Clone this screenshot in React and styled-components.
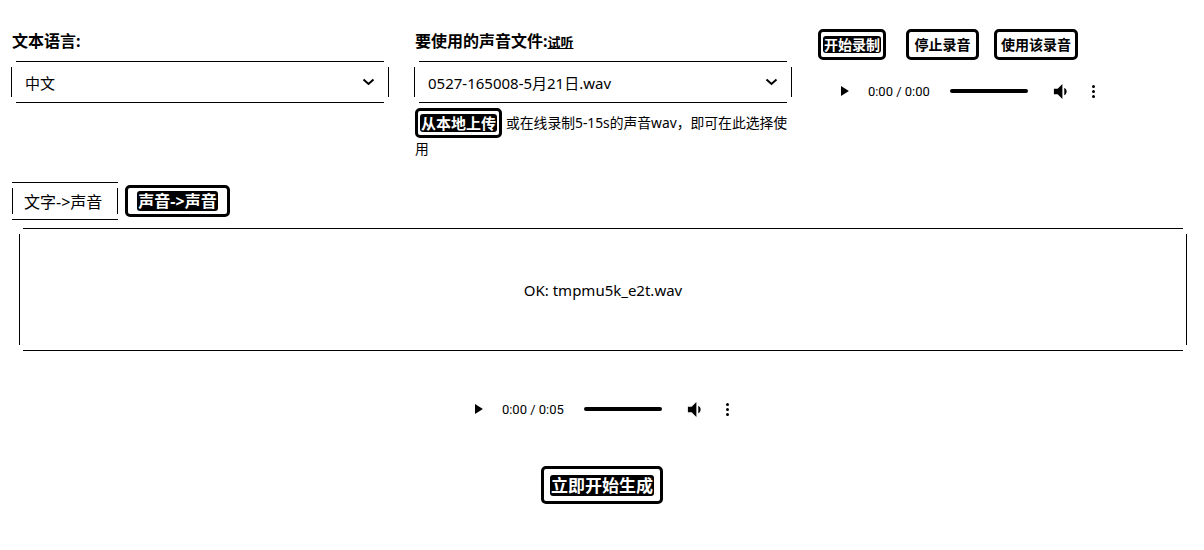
import React from "react";
import styled, { createGlobalStyle } from "styled-components";

const Global = createGlobalStyle`
  html, body { margin: 0; padding: 0; background: #fff; }
  body {
    font-family: "Noto Sans", "Noto Sans CJK SC", sans-serif;
    color: #000;
  }
`;

const gapBorder = (h = 8, v = 12) => `
  background:
    linear-gradient(#000, #000) top center / calc(100% - ${h}px) 1px no-repeat,
    linear-gradient(#000, #000) bottom center / calc(100% - ${h}px) 1px no-repeat,
    linear-gradient(#000, #000) left center / 1px calc(100% - ${v}px) no-repeat,
    linear-gradient(#000, #000) right center / 1px calc(100% - ${v}px) no-repeat,
    #fff;
`;

const Page = styled.div`
  padding: 29px 12px 40px;
  width: 1180px;
`;

const TopGrid = styled.div`
  display: grid;
  grid-template-columns: repeat(3, 377px);
  column-gap: 26px;
`;

const Column = styled.div`
  display: flex;
  flex-direction: column;
  align-items: flex-start;
`;

const Label = styled.div`
  font-size: 16px;
  font-weight: 700;
  line-height: 24px;
  height: 24px;
  margin: 0 0 8px;
  white-space: nowrap;
`;

const Hint = styled.span`
  font-size: 13px;
  font-weight: 700;
  text-decoration: underline;
`;

const SelectBox = styled.div`
  ${gapBorder(10, 12)}
  box-sizing: border-box;
  width: 378px;
  height: 42px;
  margin-left: -1px;
  display: flex;
  align-items: center;
  justify-content: space-between;
  padding: 0 14px 0 14px;
  font-size: 15px;
`;

const Chevron = () => (
  <svg width="13" height="8" viewBox="0 0 13 8">
    <path d="M1.5 1.5 L6.5 6 L11.5 1.5" fill="none" stroke="#000" strokeWidth="2" />
  </svg>
);

const Btn = styled.button`
  font-family: inherit;
  background: #fff;
  border: 3px solid #000;
  border-radius: 5px;
  padding: 0;
  margin: 0 0 0 ${(p) => p.$ml || 0}px;
  cursor: pointer;
  display: inline-flex;
  align-items: center;
  justify-content: center;
  vertical-align: middle;
  box-sizing: border-box;
  width: ${(p) => p.$w}px;
  height: ${(p) => p.$h || 31}px;
  flex: none;
`;

const BtnText = styled.span`
  font-size: ${(p) => p.$size || 14}px;
  font-weight: 700;
  line-height: 1.25;
  padding: 0 1px;
  border-radius: 3px;
  background: ${(p) => (p.$ghost ? "#fff" : "#000")};
  color: ${(p) => (p.$ghost ? "#000" : "#fff")};
  white-space: nowrap;
`;

const UploadRow = styled.div`
  margin-top: 5px;
  font-size: 13.8px;
  line-height: 20px;
  width: 377px;
`;

const UploadNote = styled.span`
  margin-left: 4px;
  vertical-align: middle;
`;

const ButtonRow = styled.div`
  display: flex;
`;

const Player = styled.div`
  width: 300px;
  height: 54px;
  box-sizing: border-box;
  display: flex;
  align-items: center;
  padding: 0 23px 0 23px;
  margin: ${(p) => (p.$center ? "0 auto" : "4px 0 0")};
`;

const Time = styled.span`
  font-family: Roboto, "Noto Sans", sans-serif;
  font-size: 13px;
  margin-left: 19px;
  width: 67px;
  white-space: nowrap;
`;

const Track = styled.div`
  width: 79px;
  height: 4px;
  border-radius: 2px;
  background: #000;
  margin-left: 16px;
`;

const VolumeWrap = styled.div`
  margin-left: 24px;
  display: flex;
`;

const Dots = styled.div`
  margin-left: 23px;
  display: flex;
  flex-direction: column;
  gap: 2px;
  & > i {
    width: 3px;
    height: 3px;
    border-radius: 50%;
    background: #000;
    display: block;
  }
`;

const AudioPlayer = ({ total, center }) => (
  <Player $center={center}>
    <svg width="8" height="10" viewBox="0 0 8 10">
      <path d="M0 0 L8 5 L0 10 Z" fill="#000" />
    </svg>
    <Time>0:00 / {total}</Time>
    <Track />
    <VolumeWrap>
      <svg width="17" height="17" viewBox="2 3 16 18">
        <path
          d="M3 9v6h4l5 5V4L7 9H3zm13.5 3c0-1.77-1.02-3.29-2.5-4.03v8.05c1.48-.73 2.5-2.25 2.5-4.02z"
          fill="#000"
        />
      </svg>
    </VolumeWrap>
    <Dots>
      <i />
      <i />
      <i />
    </Dots>
  </Player>
);

const TabRow = styled.div`
  display: flex;
  align-items: center;
  gap: 7px;
  margin-top: 23px;
`;

const Tab = styled.div`
  ${gapBorder(0, 12)}
  box-sizing: border-box;
  width: 106px;
  height: 38px;
  display: flex;
  align-items: center;
  padding-left: 12px;
  font-size: 16px;
`;

const Output = styled.div`
  ${gapBorder(8, 12)}
  box-sizing: border-box;
  margin: 8px 5px 0 7px;
  height: 123px;
  display: flex;
  align-items: center;
  justify-content: center;
  font-size: 15px;
`;

const Center = styled.div`
  display: flex;
  justify-content: center;
  margin-top: ${(p) => p.$mt || 0}px;
`;

export default function App() {
  return (
    <>
      <Global />
      <Page>
        <TopGrid>
          <Column>
            <Label>文本语言:</Label>
            <SelectBox>
              <span>中文</span>
              <Chevron />
            </SelectBox>
          </Column>
          <Column>
            <Label>
              要使用的声音文件:<Hint>试听</Hint>
            </Label>
            <SelectBox>
              <span>0527-165008-5月21日.wav</span>
              <Chevron />
            </SelectBox>
            <UploadRow>
              <Btn $w={87} $h={30}>
                <BtnText $size={15}>从本地上传</BtnText>
              </Btn>
              <UploadNote>或在线录制5-15s的声音wav，即可在此选择使用</UploadNote>
            </UploadRow>
          </Column>
          <Column>
            <ButtonRow>
              <Btn $w={68}>
                <BtnText>开始录制</BtnText>
              </Btn>
              <Btn $w={73} $ml={20}>
                <BtnText $ghost>停止录音</BtnText>
              </Btn>
              <Btn $w={84} $ml={15}>
                <BtnText $ghost>使用该录音</BtnText>
              </Btn>
            </ButtonRow>
            <AudioPlayer total="0:00" />
          </Column>
        </TopGrid>

        <TabRow>
          <Tab>文字-&gt;声音</Tab>
          <Btn $w={105} $h={32}>
            <BtnText $size={16}>声音-&gt;声音</BtnText>
          </Btn>
        </TabRow>

        <Output>OK: tmpmu5k_e2t.wav</Output>

        <Center $mt={31}>
          <AudioPlayer total="0:05" center />
        </Center>

        <Center $mt={30}>
          <Btn $w={122} $h={38}>
            <BtnText $size={17}>立即开始生成</BtnText>
          </Btn>
        </Center>
      </Page>
    </>
  );
}
